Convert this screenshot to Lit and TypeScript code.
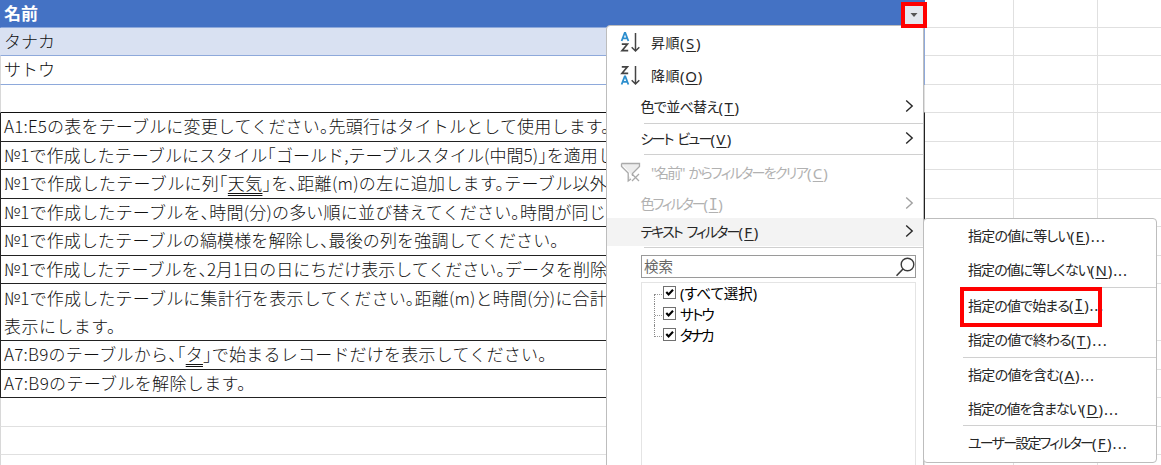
import { LitElement, html, css, svg, nothing } from 'lit';
import { customElement, property } from 'lit/decorators.js';
import { styleMap } from 'lit/directives/style-map.js';

interface MenuEntry {
  label: string;
  key: string;
  tail?: string;
  width: number;
  keyWidth: number;
  height: number;
  icon?: 'asc' | 'desc' | 'clear';
  arrow?: boolean;
  disabled?: boolean;
  active?: boolean;
  line?: boolean;
}

const NO_TABLE = '№1で作成したテーブル';

const TASKS = [
  { height: 29, lines: [{ text: 'A1:E5の表をテーブルに変更してください。先頭行はタイトルとして使用します。', width: 606 }] },
  { height: 28, lines: [{ text: NO_TABLE + 'にスタイル「ゴールド,テーブルスタイル(中間5)」を適用し', width: 611 }] },
  { height: 29, lines: [{ text: NO_TABLE + 'に列「', mark: '天気', rest: '」を、距離(m)の左に追加します。テーブル以外', width: 603 }] },
  { height: 28, lines: [{ text: NO_TABLE + 'を、時間(分)の多い順に並び替えてください。時間が同じ', width: 602 }] },
  { height: 29, lines: [{ text: NO_TABLE + 'の縞模様を解除し、最後の列を強調してください。', width: 555 }] },
  { height: 28, lines: [{ text: NO_TABLE + 'を、2月1日の日にちだけ表示してください。データを削除', width: 603 }] },
  {
    height: 57,
    lines: [
      { text: NO_TABLE + 'に集計行を表示してください。距離(m)と時間(分)に合計', width: 603 },
      { text: '表示にします。', width: 112 },
    ],
  },
  { height: 29, lines: [{ text: 'A7:B9のテーブルから、「', mark: 'タ', rest: '」で始まるレコードだけを表示してください。', width: 543 }] },
  { height: 28, lines: [{ text: 'A7:B9のテーブルを解除します。', width: 242 }] },
];

const FILTER_MENU: MenuEntry[] = [
  { label: '昇順', key: 'S', width: 29, keyWidth: 22, height: 34, icon: 'asc' },
  { label: '降順', key: 'O', width: 29, keyWidth: 23, height: 32, icon: 'desc' },
  { label: '色で並べ替え', key: 'T', width: 78, keyWidth: 22, height: 31, arrow: true, line: true },
  { label: 'シート ビュー', key: 'V', width: 70, keyWidth: 22, height: 30, arrow: true, line: true },
  { label: '"名前" からフィルターをクリア', key: 'C', width: 156, keyWidth: 22, height: 36, icon: 'clear', disabled: true },
  { label: '色フィルター', key: 'I', width: 63, keyWidth: 20, height: 27, arrow: true, disabled: true },
  { label: 'テキスト フィルター', key: 'F', width: 98, keyWidth: 21, height: 28, arrow: true, active: true },
];

const TEXT_MENU: MenuEntry[] = [
  { label: '指定の値に等しい', key: 'E', tail: '...', width: 102, keyWidth: 36, height: 34 },
  { label: '指定の値に等しくない', key: 'N', tail: '...', width: 122, keyWidth: 38, height: 34, line: true },
  { label: '指定の値で始まる', key: 'I', tail: '...', width: 101, keyWidth: 35, height: 36 },
  { label: '指定の値で終わる', key: 'T', tail: '...', width: 103, keyWidth: 37, height: 33, line: true },
  { label: '指定の値を含む', key: 'A', tail: '...', width: 91, keyWidth: 36, height: 35 },
  { label: '指定の値を含まない', key: 'D', tail: '...', width: 113, keyWidth: 38, height: 32, line: true },
  { label: 'ユーザー設定フィルター', key: 'F', tail: '...', width: 124, keyWidth: 36, height: 35 },
];

const VALUES = [
  { text: '(すべて選択)', width: 77 },
  { text: 'サトウ', width: 33 },
  { text: 'タナカ', width: 32 },
];

// Tracks its text out (or in) until it takes up the given width
@customElement('fit-text')
export class FitText extends LitElement {
  @property({ type: Number }) width = 0;

  firstUpdated() {
    const count = (this.textContent ?? '').length;
    const natural = this.getBoundingClientRect().width;
    if (count && this.width) {
      this.style.letterSpacing = `${(this.width - natural) / count}px`;
    }
  }

  render() {
    return html`<slot></slot>`;
  }

  static styles = css`
    :host {
      display: inline-block;
      white-space: pre;
      flex: none;
    }
  `;
}

@customElement('filter-menu')
export class FilterMenu extends LitElement {
  @property({ attribute: false }) entries: MenuEntry[] = [];
  @property({ type: Boolean, reflect: true }) sub = false;

  private icon(name?: string) {
    if (name === 'clear') {
      return html`<svg class="icon" width="22" height="22" viewBox="0 0 22 22" fill="none">
        <path d="M1.5 1.5H19.5V4.5L12.5 11.5V14M1.5 1.5V4.5L8.2 11V19L11 17" fill="#ededed" stroke="#aaa" stroke-width="1.3" />
        <path d="M12 12L19 19M19 12L12 19" stroke="#aaa" stroke-width="1.3" />
      </svg>`;
    }
    const a = (y: number) => svg`<path d="M1.6 ${y + 8}L4.7 ${y}H5.3L8.4 ${y + 8}M2.7 ${y + 5.4}H7.3" stroke="#2e8fce" stroke-width="1.8" />`;
    const z = (y: number) => svg`<path d="M1.8 ${y + 0.8}H7.4L2 ${y + 7.3}H8.2" stroke="#444" stroke-width="1.7" />`;
    return html`<svg class="icon" width="22" height="22" viewBox="0 0 22 22" fill="none">
      ${name === 'asc' ? [a(1), z(11.4)] : [z(1), a(11.5)]}
      <path d="M15.5 1V19M11.7 15.2L15.5 19L19.3 15.2" stroke="#444" stroke-width="1.5" />
    </svg>`;
  }

  render() {
    return html`${this.entries.map(
      (e) => html`
        <div
          class="item ${e.disabled ? 'disabled' : ''} ${e.active ? 'active' : ''}"
          style=${styleMap({ height: `${e.height}px` })}
        >
          ${e.icon ? this.icon(e.icon) : nothing}
          <fit-text class="label" .width=${e.width}>${e.label}</fit-text>
          <fit-text class="label hint" .width=${e.keyWidth}>(<span class="key ${e.key === 'I' ? 'slab' : ''}">${e.key}</span>)${e.tail ?? ''}</fit-text>
          ${e.arrow
            ? html`<svg class="arrow" width="9" height="14" viewBox="0 0 9 14" fill="none">
                <path d="M1.2 1.6L7.2 7L1.2 12.4" stroke="currentColor" stroke-width="1.4" />
              </svg>`
            : nothing}
        </div>
        ${e.line ? html`<div class="line"></div>` : nothing}
      `
    )}<slot></slot>`;
  }

  static styles = css`
    :host {
      display: block;
      box-sizing: border-box;
      background: #fff;
      border: 1px solid #bdbdbd;
      border-radius: 4px;
      color: #262626;
      font: 14.5px/20px 'Noto Sans', 'Noto Sans CJK JP', sans-serif;
      font-feature-settings: 'palt';
    }

    .item {
      display: flex;
      align-items: center;
      padding-left: 33.5px;
      padding-right: 9px;
    }

    .label {
      margin-bottom: 1px;
      font-size: 14px;
      word-spacing: 3px;
    }

    .hint {
      font-size: 15px;
    }

    .icon {
      margin-left: -21px;
      margin-right: 9.5px;
      flex: none;
    }

    .arrow {
      margin-left: auto;
      margin-bottom: 3px;
    }

    .disabled {
      color: #b1b1b1;
    }

    .disabled .arrow {
      color: #a0a0a0;
    }

    .active {
      background: #f3f3f3;
    }

    .key {
      text-decoration: underline;
      text-underline-offset: 2px;
    }

    .slab {
      font-family: 'DejaVu Sans Mono', monospace;
    }

    .line {
      height: 1px;
      margin-left: 37px;
      background: #d0d0d0;
    }

    :host([sub]) .item {
      padding-left: 44px;
    }

    :host([sub]) .line {
      margin-left: 39px;
    }
  `;
}

@customElement('app-root')
export class AppRoot extends LitElement {
  private row(height: number, kind: string, content: unknown = nothing) {
    return html`<div class="row ${kind}" style=${styleMap({ height: `${height}px` })}>
      <div class="cell main">${content}</div>
      <div class="cell"></div>
      <div class="cell"></div>
      <div class="cell last"></div>
    </div>`;
  }

  render() {
    return html`
      <div class="sheet">
        ${this.row(28, 'head', html`<fit-text .width=${34}>名前</fit-text>`)}
        ${this.row(28, 'band', html`<fit-text .width=${51}>タナカ</fit-text>`)}
        ${this.row(29, 'plain', html`<fit-text .width=${51}>サトウ</fit-text>`)}
        ${this.row(28, 'above')}
        ${TASKS.map((t) =>
          this.row(
            t.height,
            t.lines.length > 1 ? 'task tall' : 'task',
            t.lines.map(
              (l: any) => html`<fit-text .width=${l.width}>${l.text}${l.mark ? html`<span class="mark">${l.mark}</span>` : nothing}${l.rest ?? ''}</fit-text>`
            )
          )
        )}
        ${[29, 28, 29].map((h) => this.row(h, 'empty'))}
      </div>

      <filter-menu class="menu" .entries=${FILTER_MENU}>
        <div class="line"></div>
        <div class="search">
          <fit-text .width=${29}>検索</fit-text>
          <svg width="20" height="20" viewBox="0 0 20 20" fill="none">
            <circle cx="12.5" cy="7.5" r="6.3" stroke="#3b3b3b" stroke-width="1.4" />
            <path d="M8 12L1.5 18.7" stroke="#3b3b3b" stroke-width="1.6" />
          </svg>
        </div>
        <div class="values">
          ${VALUES.map(
            (v) => html`<div class="value">
              <span class="branch"></span>
              <svg class="box" width="13" height="13" viewBox="0 0 13 13" fill="none">
                <rect x="0.5" y="0.5" width="12" height="12" fill="#fff" stroke="#707070" />
                <path d="M3.3 6L5.6 8.5L10 3.8" stroke="#000" stroke-width="2.1" />
              </svg>
              <fit-text .width=${v.width}>${v.text}</fit-text>
            </div>`
          )}
        </div>
      </filter-menu>

      <filter-menu class="submenu" sub .entries=${TEXT_MENU}></filter-menu>

      <div class="dropdown">
        <svg width="8" height="4" viewBox="0 0 8 4"><path d="M0.5 0H7.5L4 4Z" fill="#555" /></svg>
      </div>
      <div class="frame"></div>
    `;
  }

  static styles = css`
    :host {
      display: block;
      position: relative;
      width: 1161px;
      height: 465px;
      overflow: hidden;
      background: #fff;
    }

    .sheet {
      color: #111;
      font: 300 17px/26px 'Noto Sans CJK JP', sans-serif;
      font-feature-settings: 'halt';
    }

    .row {
      display: grid;
      grid-template-columns: 925px 89px 84px 1fr;
    }

    .cell {
      box-sizing: border-box;
      border-right: 1px solid #e0e0e0;
      border-bottom: 1px solid #e0e0e0;
      overflow: hidden;
    }

    .last {
      border-right: none;
    }

    .main {
      display: flex;
      flex-direction: column;
      align-items: flex-start;
      padding-left: 3px;
      border-left: 1px solid #d8d8d8;
    }

    .head .main {
      background: #4472c4;
      border-color: #4472c4;
      border-bottom-color: #8ea9db;
      color: #fff;
      font-weight: 700;
      line-height: 25px;
    }

    .band .main {
      background: #d9e1f2;
      border-color: #8ea9db;
      border-left-color: #d9e1f2;
    }

    .plain .main {
      border-right-color: #8ea9db;
      border-bottom-color: #8ea9db;
    }

    .above .main {
      border-bottom-color: #111;
    }

    .task .main {
      border-color: #222;
    }

    .tall .main {
      line-height: 28px;
    }

    .mark {
      text-decoration: underline double 1px;
      text-underline-offset: 3px;
    }

    .menu {
      position: absolute;
      left: 606px;
      top: 25px;
      width: 318px;
      height: 460px;
    }

    .submenu {
      position: absolute;
      left: 923px;
      top: 218px;
      width: 234px;
      height: 245px;
    }

    .line {
      height: 1px;
      margin: 1px 0 7px 37px;
      background: #d0d0d0;
    }

    .search {
      display: flex;
      align-items: center;
      justify-content: space-between;
      box-sizing: border-box;
      width: 275px;
      height: 23px;
      margin-left: 34px;
      padding-left: 2px;
      border: 1px solid #9a9a9a;
      color: #666;
      line-height: 18px;
    }

    .search fit-text {
      margin-bottom: 2px;
    }

    .values {
      box-sizing: border-box;
      width: 275px;
      height: 200px;
      margin: 4px 0 0 34px;
      padding-left: 12px;
      border: 1px solid #e4e4e4;
      color: #000;
    }

    .value {
      display: flex;
      align-items: center;
      height: 21px;
    }

    .value fit-text {
      margin-bottom: 1px;
    }

    .branch {
      box-sizing: border-box;
      width: 9px;
      height: 21px;
      border-left: 1px dotted #888;
      background: repeating-linear-gradient(90deg, #999 0 1px, transparent 1px 2px) 0 11px / 100% 1px no-repeat;
    }

    .value:first-child .branch {
      height: 10px;
      align-self: flex-end;
      background-position: 0 0;
    }

    .value:last-child .branch {
      height: 12px;
      align-self: flex-start;
    }

    .box {
      margin: 0 4px 3px 0;
    }

    .dropdown {
      position: absolute;
      left: 901px;
      top: 2px;
      display: grid;
      place-items: center;
      box-sizing: border-box;
      width: 26px;
      height: 26px;
      border: 4px solid #f00;
      background: #e4e7ee;
    }

    .frame {
      position: absolute;
      left: 960px;
      top: 287px;
      box-sizing: border-box;
      width: 142px;
      height: 40px;
      border: 4px solid #f00;
    }
  `;
}
